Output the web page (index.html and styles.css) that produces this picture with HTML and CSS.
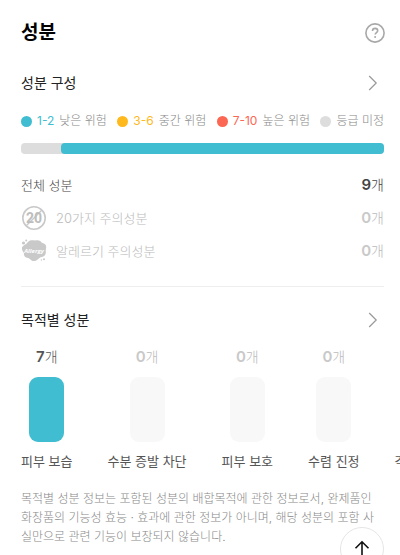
FILE: index.html
```html
<!DOCTYPE html>
<html lang="ko">
<head>
<meta charset="utf-8">
<meta name="viewport" content="width=device-width, initial-scale=1">
<title>성분</title>
<link rel="stylesheet" href="styles.css">
</head>
<body>
<main class="page">
  <header class="title-row">
    <h1>성분</h1>
    <button class="icon-button" type="button" aria-label="도움말">
      <svg width="20" height="20" viewBox="0 0 20 20" fill="none" stroke="#a8a8a8"><circle cx="10" cy="10" r="9.1" stroke-width="1.6"/><path d="M7.5 8c0-1.6 1-2.6 2.6-2.6s2.6.9 2.6 2.3c0 1.8-2.5 1.9-2.5 3.9" stroke-width="1.6"/><circle cx="10.1" cy="14" r="1" fill="#a8a8a8" stroke="none"/></svg>
    </button>
  </header>

  <section class="composition">
    <a class="section-link" href="#composition">
      <h2>성분 구성</h2>
      <svg class="chevron" width="10" height="16" viewBox="0 0 10 16"><path d="M1.2 1l7 7-7 7"/></svg>
    </a>
    <ul class="legend">
      <li class="low"><i></i><b>1-2</b>낮은 위험</li>
      <li class="mid"><i></i><b>3-6</b>중간 위험</li>
      <li class="high"><i></i><b>7-10</b>높은 위험</li>
      <li class="none"><i></i>등급 미정</li>
    </ul>
    <div class="ratio"><div class="ratio-fill"></div></div>
    <ul class="counts">
      <li><span>전체 성분</span><span class="value"><strong>9</strong>개</span></li>
      <li class="muted">
        <span class="with-icon">
          <svg width="26" height="26" viewBox="0 0 26 26"><circle cx="13" cy="13" r="11.2" fill="none" stroke="#c9c9c9" stroke-width="1.6"/><path d="M5 21L21 5" stroke="#c9c9c9" stroke-width="1.5"/><text class="icon-twenty" x="13" y="18" text-anchor="middle">20</text></svg>
          20가지 주의성분
        </span>
        <span class="value"><strong>0</strong>개</span>
      </li>
      <li class="muted">
        <span class="with-icon">
          <svg width="26" height="26" viewBox="0 0 26 26"><path fill="#c9c9c9" d="M6.500 4.500C8 2.200 11 2 14 2.600C17 2 19.500 2.400 20.500 4.600C22.500 5.500 25.200 6 25.200 9C25.200 11 24.500 11.500 24.800 13.500C25 16.500 23.500 18.800 20.500 19C18 19.300 17 22.500 13.500 23C10 23.300 9.500 20.700 7 20C4 19.600 2.500 17.500 3 15.500C2.500 13.500 .6 12.500 1 9.800C1.500 7.200 5 7 6.500 4.500z"/><g fill="#c9c9c9"><circle cx="2.500" cy="5" r="1.600"/><circle cx="5.200" cy="2.400" r="1"/><circle cx="23" cy="21.200" r="1"/><circle cx="20.400" cy="22" r=".7"/></g><text class="icon-allergy" x="13" y="15" text-anchor="middle">Allergy</text></svg>
          알레르기 주의성분
        </span>
        <span class="value"><strong>0</strong>개</span>
      </li>
    </ul>
  </section>

  <section class="purpose">
    <a class="section-link" href="#purpose">
      <h2>목적별 성분</h2>
      <svg class="chevron" width="10" height="16" viewBox="0 0 10 16"><path d="M1.2 1l7 7-7 7"/></svg>
    </a>
    <ul class="bars">
      <li class="active"><span class="value"><strong>7</strong>개</span><div class="bar"></div><span>피부 보습</span></li>
      <li class="empty"><span class="value"><strong>0</strong>개</span><div class="bar"></div><span>수분 증발 차단</span></li>
      <li class="empty"><span class="value"><strong>0</strong>개</span><div class="bar"></div><span>피부 보호</span></li>
      <li class="empty"><span class="value"><strong>0</strong>개</span><div class="bar"></div><span>수렴 진정</span></li>
      <li class="empty"><span class="value"><strong>0</strong>개</span><div class="bar"></div><span>각질 제거 도움</span></li>
    </ul>
    <p class="note">목적별 성분 정보는 포함된 성분의 배합목적에 관한 정보로서, 완제품인 화장품의 기능성 효능 · 효과에 관한 정보가 아니며, 해당 성분의 포함 사실만으로 관련 기능이 보장되지 않습니다.</p>
  </section>
</main>
<button class="to-top" type="button" aria-label="맨 위로">
  <svg width="16" height="18" viewBox="0 0 16 18" fill="none" stroke="#111" stroke-width="1.6"><path d="M8 17V2M1.500 8.300L8 1.800l6.500 6.500"/></svg>
</button>
</body>
</html>
```
FILE: styles.css
```css
* {
  box-sizing: border-box;
}

body {
  margin: 0;
  background: #fff;
  color: #444;
  font: 300 13px/20px Inter, "Noto Sans CJK KR", sans-serif;
}

h1, h2, ul, p {
  margin: 0;
  padding: 0;
}

ul {
  list-style: none;
}

.page {
  padding: 18px 15px 0 21px;
  overflow: hidden;
}

.title-row {
  display: flex;
  align-items: center;
  justify-content: space-between;
  height: 30px;
}

h1 {
  color: #000;
  font-size: 19px;
  font-weight: 700;
}

.icon-button {
  display: flex;
  padding: 0;
  border: 0;
  background: none;
}

.composition {
  margin-right: 1px;
  padding: 24px 0 22px;
  border-bottom: 1px solid #eee;
}

.section-link {
  display: flex;
  align-items: center;
  justify-content: space-between;
  height: 22px;
  padding-right: 6px;
  color: #222;
  text-decoration: none;
}

h2 {
  font-size: 14px;
  font-weight: 400;
}

.chevron {
  fill: none;
  stroke: #999;
  stroke-width: 1.2;
}

.legend {
  display: flex;
  justify-content: space-between;
  margin-top: 17px;
  color: #888;
  font-size: 12px;
  white-space: nowrap;
}

.legend li {
  display: flex;
  align-items: center;
  gap: 5px;
}

.legend i {
  width: 11px;
  height: 11px;
  border-radius: 50%;
  background: #ddd;
}

.legend b {
  font-weight: 400;
}

.low i {
  background: #40bdd0;
}

.low b {
  color: #40bdd0;
}

.mid i {
  background: #ffb91d;
}

.mid b {
  color: #ffb91d;
}

.high i {
  background: #fb6753;
}

.high b {
  color: #fb6753;
}

.ratio {
  height: 11px;
  margin-top: 12px;
  border-radius: 4px;
  background: #ddd;
}

.ratio-fill {
  width: 89%;
  height: 100%;
  margin-left: auto;
  border-radius: 4px;
  background: #40bdd0;
}

.counts {
  display: grid;
  gap: 7px;
  margin-top: 18px;
}

.counts li {
  display: flex;
  align-items: center;
  justify-content: space-between;
  height: 26px;
}

.with-icon {
  display: flex;
  align-items: center;
  gap: 9px;
}

.value {
  font-size: 14px;
  font-weight: 300;
  line-height: 22px;
}

.value strong {
  font-size: 15px;
  font-weight: 600;
}

.counts .muted,
.empty .value {
  color: #bbb;
}

.muted strong,
.empty strong {
  color: #c9c9c9;
}

.icon-twenty {
  fill: #bdbdbd;
  font: 700 14px "Roboto", sans-serif;
}

.icon-allergy {
  fill: #fff;
  font: italic 700 6px "Open Sans", sans-serif;
}

.purpose {
  padding-top: 22px;
}

.purpose .section-link {
  margin-right: 1px;
}

.bars {
  display: flex;
  gap: 35px;
  margin-top: 15px;
  margin-right: -15px;
  overflow: hidden;
  white-space: nowrap;
}

.bars li {
  display: flex;
  flex: none;
  flex-direction: column;
  align-items: center;
  gap: 9px;
  color: #555;
  font-weight: 400;
}

.bar {
  width: 35px;
  height: 65px;
  border-radius: 9px;
  background: #f8f8f8;
}

.active .bar {
  background: #40bdd0;
}

.note {
  margin-top: 18px;
  color: #888;
  font-size: 12px;
  line-height: 19px;
}

.to-top {
  position: fixed;
  right: 16px;
  bottom: -16px;
  display: flex;
  justify-content: center;
  width: 44px;
  height: 44px;
  padding: 12px 0 0;
  border: 1px solid #e5e5e5;
  border-radius: 50%;
  background: #fff;
}
```
